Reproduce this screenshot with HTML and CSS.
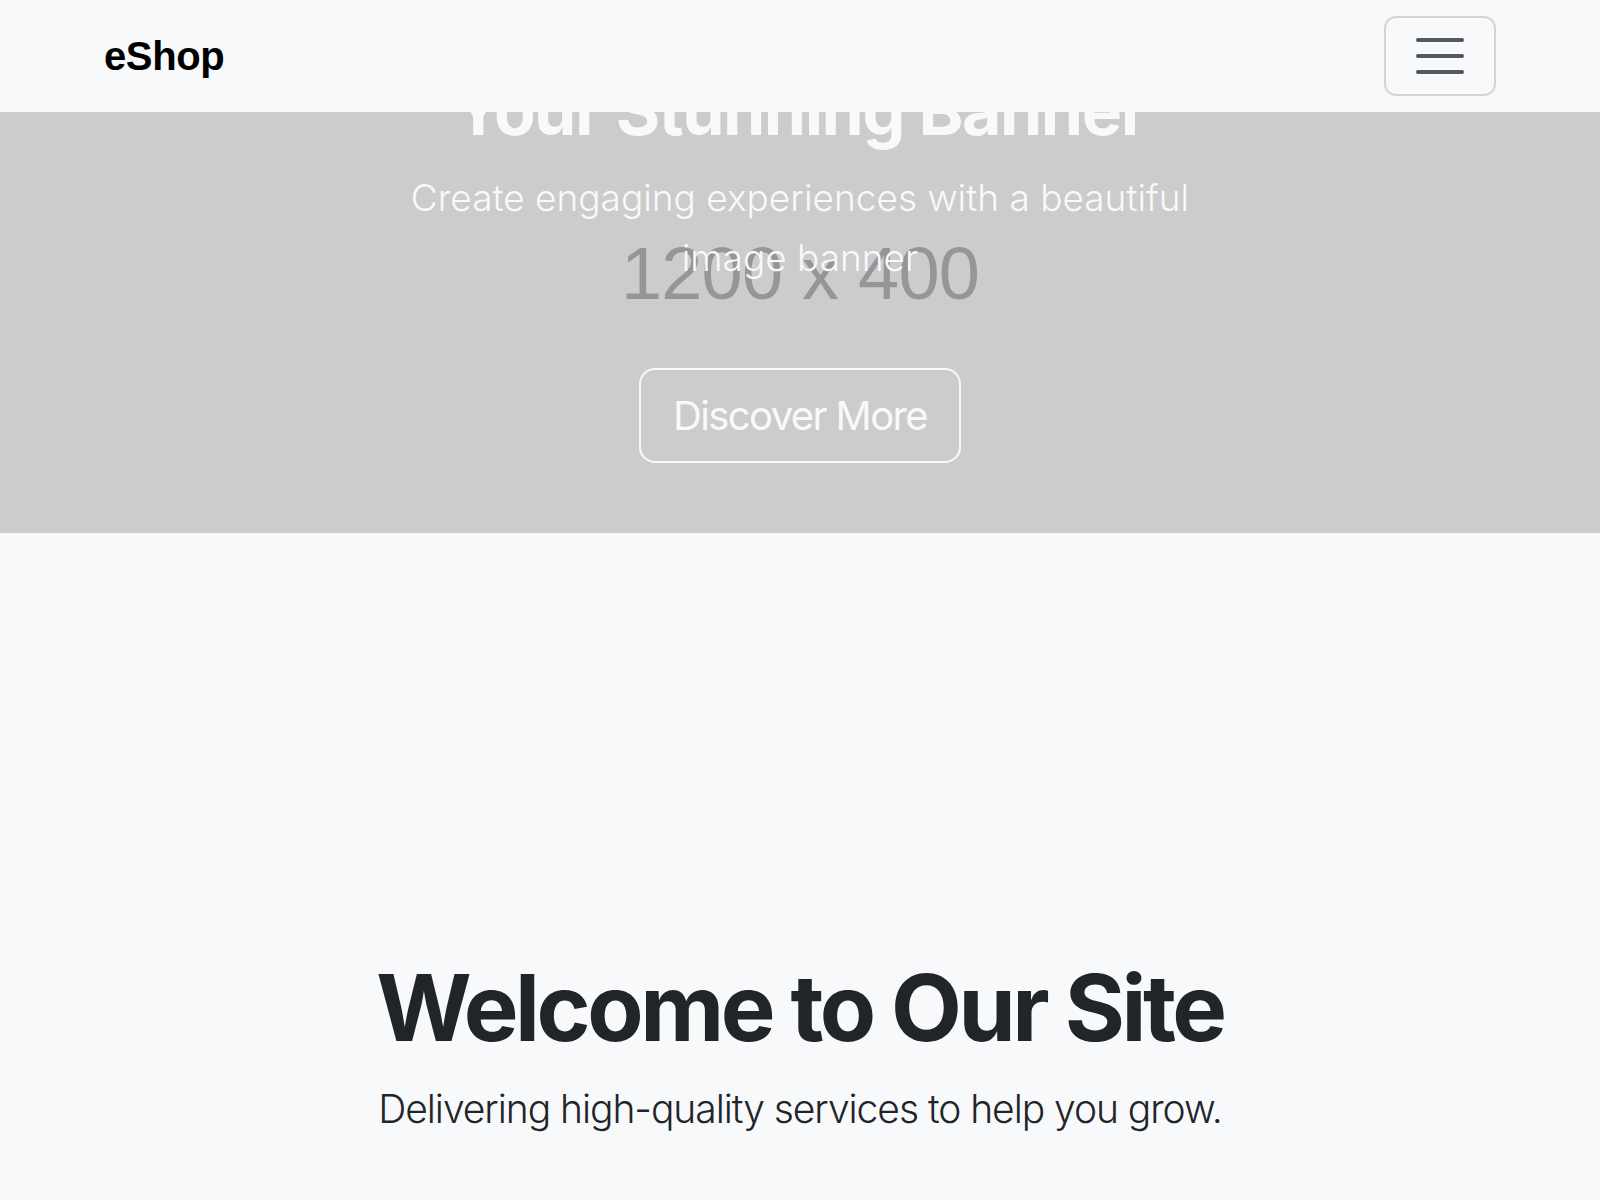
FILE: index.html
```html
<!DOCTYPE html>
<html lang="en">
<head>
<meta charset="utf-8">
<title>eShop</title>
<link rel="stylesheet" href="styles.css">
</head>
<body>
<nav class="navbar">
  <div class="nav-container">
    <a class="brand" href="#">eShop</a>
    <button class="toggler" type="button" aria-label="Toggle navigation">
      <svg class="toggler-icon" viewBox="0 0 30 30" width="60" height="60">
        <path d="M4 7h22M4 15h22M4 23h22" stroke="rgba(33,37,41,0.75)" stroke-width="2" stroke-linecap="round" fill="none"/>
      </svg>
    </button>
  </div>
</nav>

<header class="hero">
  <div class="hero-image"><span class="placeholder-text">1200 x 400</span></div>
  <div class="hero-caption">
    <h1 class="hero-title">Your Stunning Banner</h1>
    <p class="hero-lead">Create engaging experiences with a beautiful image banner</p>
    <a class="btn-outline" href="#">Discover More</a>
  </div>
</header>

<section class="welcome">
  <h2 class="welcome-title">Welcome to Our Site</h2>
  <p class="welcome-lead">Delivering high-quality services to help you grow.</p>
</section>
</body>
</html>
```

FILE: styles.css
```css
* { box-sizing: border-box; }

html, body {
  margin: 0;
  padding: 0;
}

body {
  background: #f8f9fa;
  color: #212529;
  font-family: Inter, "Noto Sans", "Liberation Sans", sans-serif;
}

/* Navbar (fixed on top of the hero) */
.navbar {
  position: fixed;
  top: 0;
  left: 0;
  right: 0;
  z-index: 10;
  background: #f8f9fa;
  padding: 16px 0;
}

.nav-container {
  width: 1440px;
  margin: 0 auto;
  padding: 0 24px;
  display: flex;
  align-items: center;
  justify-content: space-between;
}

.brand {
  font-family: "Liberation Sans", Arial, sans-serif;
  font-weight: 700;
  font-size: 40px;
  letter-spacing: -0.4px;
  line-height: 60px;
  color: #000;
  text-decoration: none;
  padding: 10px 0;
}

.toggler {
  width: 112px;
  height: 80px;
  padding: 8px 24px;
  border: 2px solid rgba(0, 0, 0, 0.15);
  border-radius: 12px;
  background: transparent;
  display: flex;
  align-items: center;
  justify-content: center;
}

.toggler-icon { display: block; }

/* Hero */
.hero {
  display: grid;
  background: #cccccc;
}

.hero-image,
.hero-caption {
  grid-area: 1 / 1;
}

.hero-image {
  height: 533px;
  display: flex;
  align-items: center;
  justify-content: center;
  padding-top: 14px;
}

.placeholder-text {
  font-family: "Liberation Sans", Arial, sans-serif;
  font-size: 74px;
  letter-spacing: -0.8px;
  color: #969696;
}

.hero-caption {
  justify-self: center;
  width: 800px;
  padding-top: 70px;
  display: flex;
  flex-direction: column;
  align-items: center;
  text-align: center;
  color: #f8f9fa;
}

.hero-title {
  margin: 0 0 16px;
  font-size: 68px;
  line-height: 81.6px;
  font-weight: 700;
  letter-spacing: -1.5px;
}

.hero-lead {
  margin: 0;
  font-size: 37px;
  line-height: 60px;
  font-weight: 300;
  letter-spacing: 0;
}

.btn-outline {
  margin-top: 80px;
  display: inline-block;
  padding: 16px 32px;
  border: 2px solid #f8f9fa;
  border-radius: 16px;
  color: #f8f9fa;
  text-decoration: none;
  font-size: 40px;
  line-height: 59px;
  font-weight: 400;
  letter-spacing: -1.6px;
}

/* Welcome section */
.welcome {
  padding: 420px 24px 60px;
  text-align: center;
}

.welcome-title {
  margin: 0 0 16px;
  font-size: 92px;
  line-height: 110.4px;
  font-weight: 700;
  letter-spacing: -3.45px;
  color: #212529;
}

.welcome-lead {
  margin: 0;
  font-size: 39px;
  line-height: 60px;
  font-weight: 300;
  letter-spacing: -1.05px;
  color: #212529;
}
```
